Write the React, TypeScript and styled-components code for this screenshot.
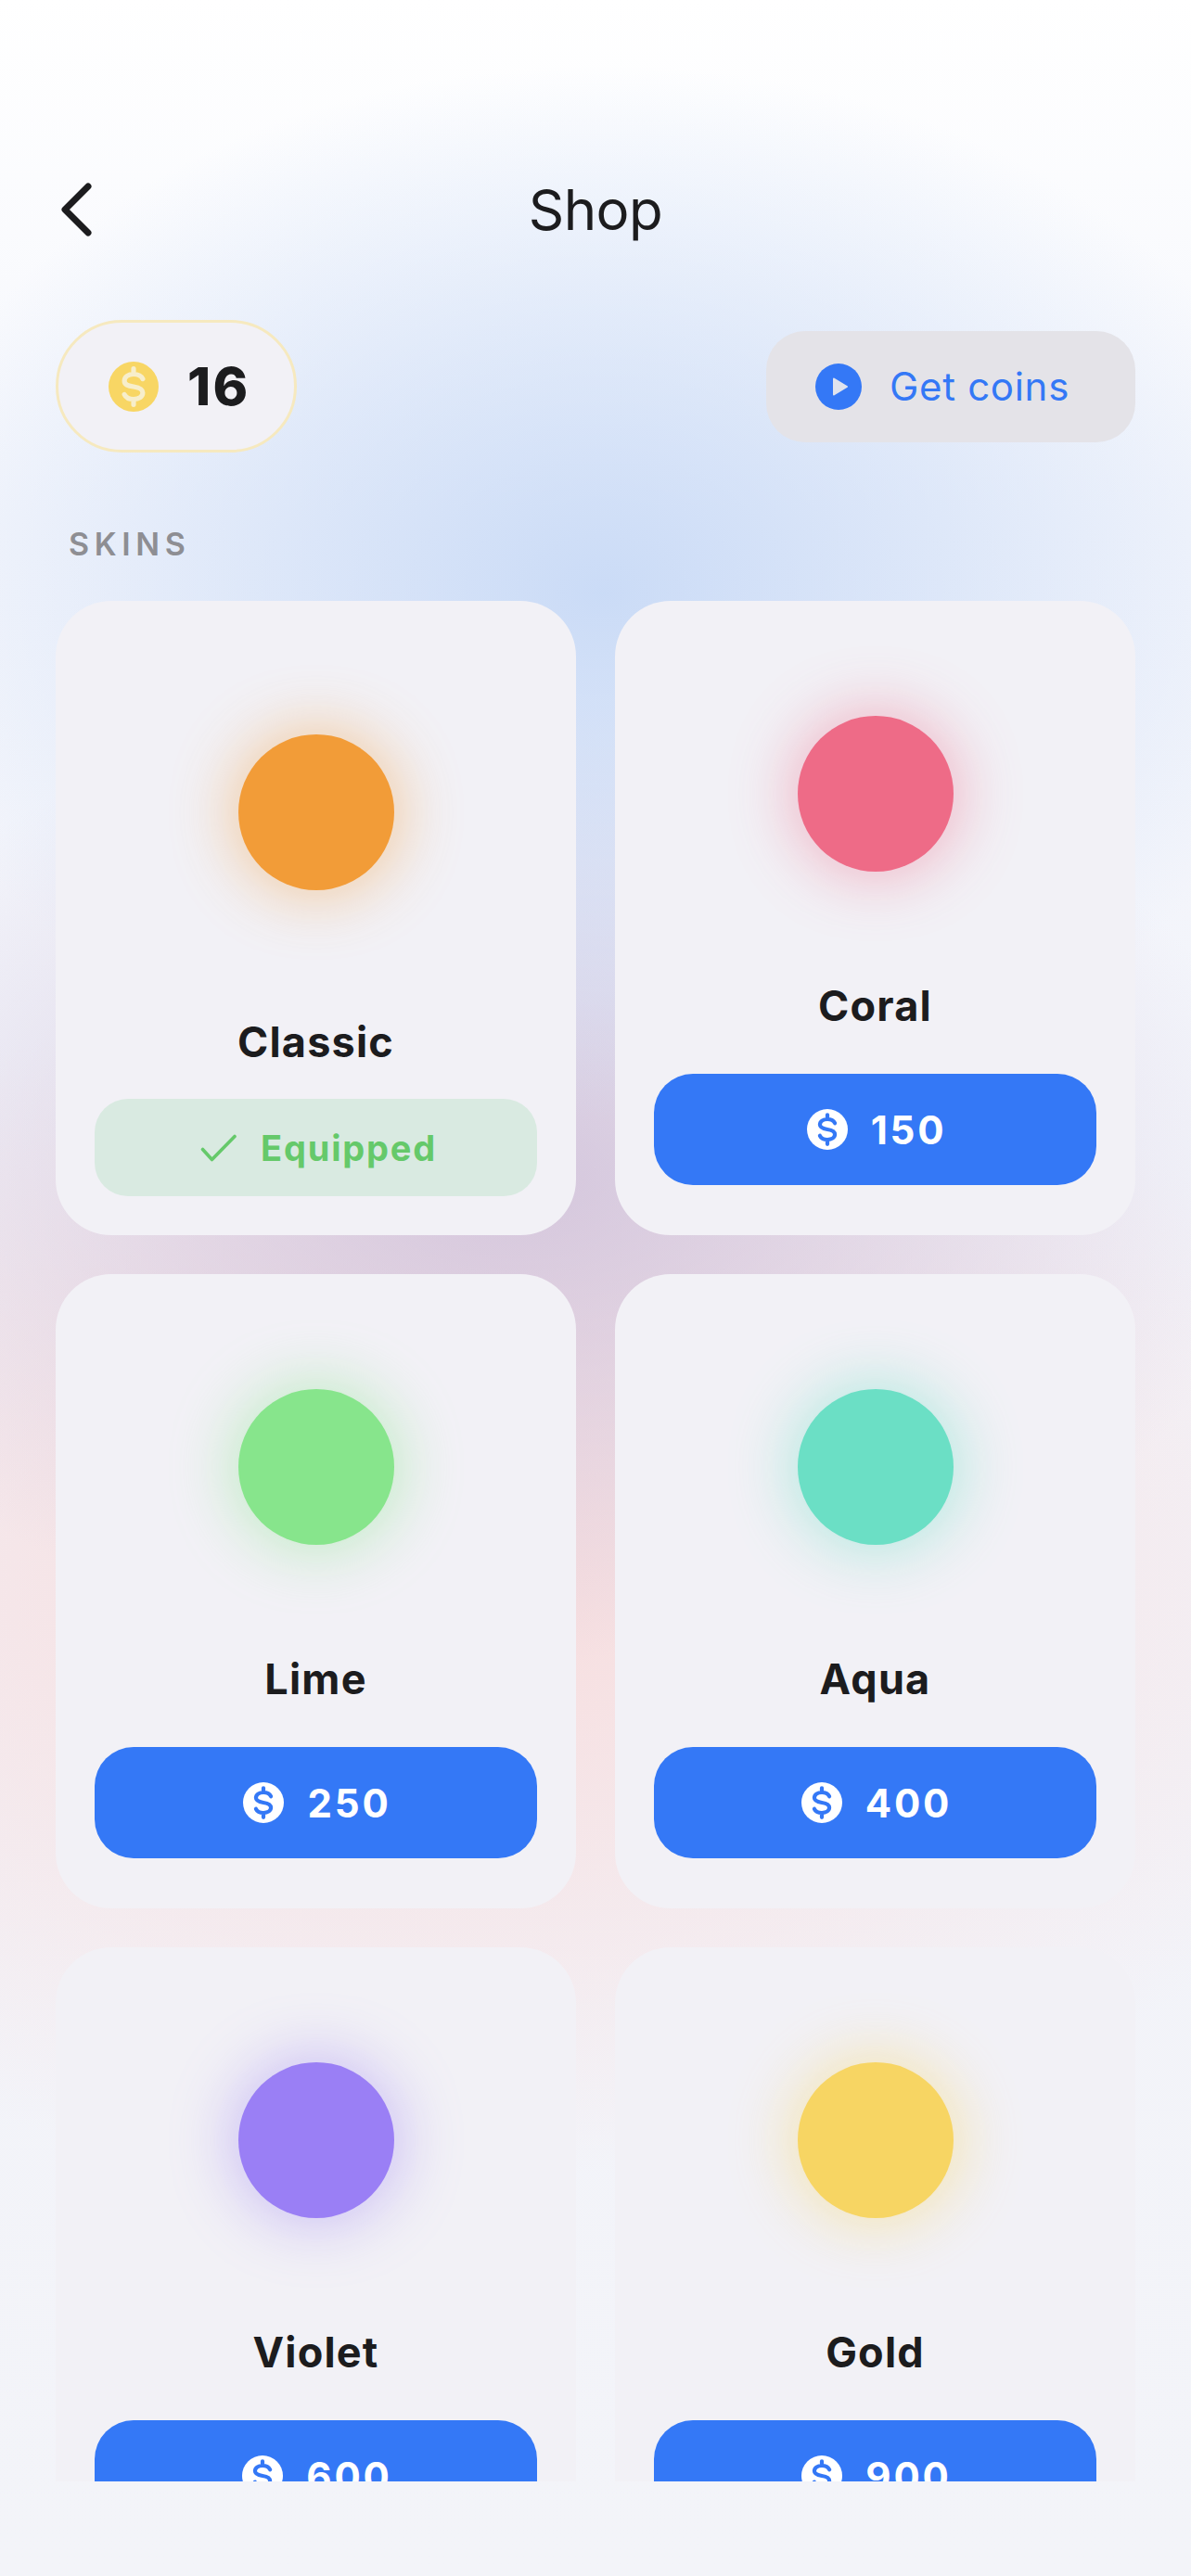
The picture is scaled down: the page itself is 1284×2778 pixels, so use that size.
import React from "react";
import styled, { createGlobalStyle } from "styled-components";

interface Skin {
    name: string;
    color: string;
    glow: string;
    price?: number;
}

const skins: Skin[] = [
    { name: "Classic", color: "#f29c38", glow: "rgba(242, 156, 56, 0.45)" },
    { name: "Coral", color: "#ee6b87", glow: "rgba(238, 107, 135, 0.45)", price: 150 },
    { name: "Lime", color: "#87e58c", glow: "rgba(135, 229, 140, 0.48)", price: 250 },
    { name: "Aqua", color: "#6bdfc5", glow: "rgba(107, 223, 197, 0.48)", price: 400 },
    { name: "Violet", color: "#9a7ff5", glow: "rgba(154, 127, 245, 0.45)", price: 600 },
    { name: "Gold", color: "#f7d563", glow: "rgba(247, 213, 99, 0.48)", price: 900 },
];

const GlobalStyle = createGlobalStyle`
    html, body {
        margin: 0;
        padding: 0;
    }
    body {
        font-family: Inter, "Liberation Sans", sans-serif;
        color: #1c1c1e;
    }
`;

const Screen = styled.div`
    width: 1284px;
    height: 2778px;
    overflow: hidden;
    display: flex;
    flex-direction: column;
    box-sizing: border-box;
    padding-bottom: 102px;
    background:
        radial-gradient(ellipse 780px 570px at 650px 640px, rgba(199, 217, 246, 0.92) 0%, rgba(199, 217, 246, 0.48) 50%, rgba(199, 217, 246, 0) 100%),
        radial-gradient(ellipse 820px 520px at 560px 1270px, rgba(202, 186, 214, 0.75), rgba(202, 186, 214, 0) 100%),
        radial-gradient(ellipse 1100px 640px at 480px 1710px, rgba(248, 218, 218, 0.9), rgba(248, 218, 218, 0) 100%),
        linear-gradient(180deg, #ffffff 0%, #f4f6fc 20%, #f2f3f9 60%, #f3f4f9 100%);
`;

const Header = styled.header`
    display: grid;
    grid-template-columns: 1fr auto 1fr;
    align-items: center;
    height: 90px;
    margin-top: 181px;
    padding: 0 60px;
`;

const BackButton = styled.div`
    display: flex;
    align-items: center;
    width: 60px;
    height: 60px;
    padding-left: 5px;
`;

const Title = styled.h1`
    margin: 0;
    font-size: 60px;
    font-weight: 400;
    letter-spacing: -0.6px;
    line-height: 90px;
`;

const BalanceRow = styled.div`
    display: flex;
    align-items: center;
    justify-content: space-between;
    margin-top: 74px;
    padding: 0 60px;
`;

const BalancePill = styled.div`
    display: flex;
    align-items: center;
    gap: 31px;
    box-sizing: border-box;
    width: 260px;
    height: 143px;
    padding-left: 54px;
    border: 3px solid #f6e9bf;
    border-radius: 72px;
    background: #f2f1f6;
`;

const BalanceValue = styled.span`
    font-size: 57px;
    font-weight: 800;
    line-height: 1;
    letter-spacing: 2.4px;
`;

const GetCoins = styled.div`
    display: flex;
    align-items: center;
    gap: 30px;
    box-sizing: border-box;
    width: 398px;
    height: 120px;
    padding-left: 53px;
    border-radius: 42px;
    background: #e4e3e8;
    color: #3478f6;
    font-size: 42px;
    font-weight: 400;
    letter-spacing: 0.7px;
`;

const SectionLabel = styled.div`
    margin: 79px 0 41px;
    padding: 0 74px;
    font-size: 34px;
    font-weight: 600;
    line-height: 40px;
    letter-spacing: 5.6px;
    color: #8e8e93;
`;

const Scroller = styled.div`
    flex: 1;
    min-height: 0;
    overflow: hidden;
    padding: 0 60px;
`;

const SkinGrid = styled.div`
    display: grid;
    grid-template-columns: 561px 561px;
    grid-auto-rows: 684px;
    gap: 42px;
`;

const Card = styled.div<{ $equipped: boolean }>`
    display: flex;
    flex-direction: column;
    align-items: center;
    box-sizing: border-box;
    padding: ${(p) => (p.$equipped ? "144px 42px 42px" : "124px 42px 54px")};
    border-radius: 60px;
    background: #f2f1f6;
`;

const Swatch = styled.div<{ $color: string; $glow: string }>`
    flex: none;
    width: 168px;
    height: 168px;
    border-radius: 50%;
    background: ${(p) => p.$color};
    box-shadow: 0 0 66px 6px ${(p) => p.$glow};
`;

const SkinName = styled.div<{ $equipped: boolean }>`
    margin-top: ${(p) => (p.$equipped ? "137px" : "118px")};
    font-size: 45px;
    font-weight: 700;
    line-height: 54px;
    letter-spacing: 1.2px;
`;

const BuyButton = styled.div`
    display: flex;
    align-items: center;
    justify-content: center;
    gap: 25px;
    flex: none;
    align-self: stretch;
    height: 120px;
    margin-top: auto;
    padding-left: 3px;
    border-radius: 42px;
    background: #3478f6;
    color: #ffffff;
    font-size: 42px;
    font-weight: 700;
    letter-spacing: 2.8px;
`;

const EquippedBadge = styled.div`
    display: flex;
    align-items: center;
    justify-content: center;
    gap: 25px;
    flex: none;
    align-self: stretch;
    height: 105px;
    margin-top: auto;
    padding-left: 6px;
    border-radius: 36px;
    background: #d9eae1;
    color: #65c96a;
    font-size: 38px;
    font-weight: 700;
    letter-spacing: 1.8px;
`;

function CoinIcon(props: { size: number; disc: string; mark: string }) {
    return (
        <svg width={props.size} height={props.size} viewBox="0 0 24 24" style={{ flex: "none" }}>
            <circle cx="12" cy="12" r="12" fill={props.disc} />
            <path
                d="M16.4 8.3C15.7 6.8 14.1 6 12 6 9.4 6 7.6 7.3 7.6 9.2c0 1.9 1.8 2.4 4.4 2.8 2.6.4 4.4 1 4.4 2.9 0 1.8-1.8 3.1-4.4 3.1-2.1 0-3.7-.8-4.4-2.3M12 3.4V6M12 18v2.6"
                fill="none"
                stroke={props.mark}
                strokeWidth="2.3"
                strokeLinecap="round"
            />
        </svg>
    );
}

function PlayIcon() {
    return (
        <svg width="50" height="50" viewBox="0 0 50 50" style={{ flex: "none" }}>
            <circle cx="25" cy="25" r="25" fill="#3478f6" />
            <path d="M20 16.5 34 25 20 33.5Z" fill="#dfe3ee" stroke="#dfe3ee" strokeWidth="2" strokeLinejoin="round" />
        </svg>
    );
}

export default function App() {
    return (
        <Screen>
            <GlobalStyle />
            <Header>
                <BackButton>
                    <svg width="34" height="58" viewBox="0 0 34 58" fill="none">
                        <path d="M30 4 5 29 30 54" stroke="#1c1c1e" strokeWidth="7" strokeLinecap="round" strokeLinejoin="round" />
                    </svg>
                </BackButton>
                <Title>Shop</Title>
            </Header>
            <BalanceRow>
                <BalancePill>
                    <CoinIcon size={54} disc="#f8d664" mark="#f7eecb" />
                    <BalanceValue>16</BalanceValue>
                </BalancePill>
                <GetCoins>
                    <PlayIcon />
                    Get coins
                </GetCoins>
            </BalanceRow>
            <SectionLabel>SKINS</SectionLabel>
            <Scroller>
                <SkinGrid>
                    {skins.map((skin) => {
                        const equipped = skin.price === undefined;
                        return (
                            <Card key={skin.name} $equipped={equipped}>
                                <Swatch $color={skin.color} $glow={skin.glow} />
                                <SkinName $equipped={equipped}>{skin.name}</SkinName>
                                {equipped ? (
                                    <EquippedBadge>
                                        <svg width="40" height="30" viewBox="0 0 40 30" fill="none">
                                            <path d="M2.5 16.5 12.5 27.5 37 2.5" stroke="#65c96a" strokeWidth="3.6" strokeLinecap="round" strokeLinejoin="round" />
                                        </svg>
                                        Equipped
                                    </EquippedBadge>
                                ) : (
                                    <BuyButton>
                                        <CoinIcon size={44} disc="#ffffff" mark="#3478f6" />
                                        {skin.price}
                                    </BuyButton>
                                )}
                            </Card>
                        );
                    })}
                </SkinGrid>
            </Scroller>
        </Screen>
    );
}
